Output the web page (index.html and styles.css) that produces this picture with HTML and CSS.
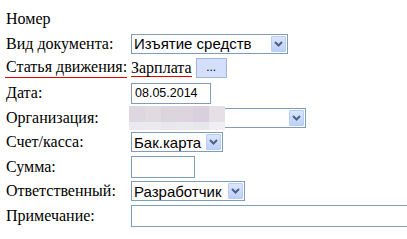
FILE: index.html
```html
<!DOCTYPE html>
<html>
<head>
<meta charset="utf-8">
<link rel="stylesheet" href="styles.css">
</head>
<body>
<div class="form">
  <div class="lbl">Номер</div><div class="ctl"></div>

  <div class="lbl">Вид документа:</div>
  <div class="ctl"><div class="sel w157"><span class="val">Изъятие средств</span><span class="arr"><svg width="9" height="6" viewBox="0 0 9 6"><path d="M1 1 L4.5 4.5 L8 1" fill="none" stroke="#4d6185" stroke-width="2"/></svg></span></div></div>

  <div class="lbl"><span class="red-u">Статья движения:</span></div>
  <div class="ctl"><span class="link">Зарплата</span><span class="btn">...</span></div>

  <div class="lbl">Дата:</div>
  <div class="ctl"><div class="inp w80">08.05.2014</div></div>

  <div class="lbl">Организация:</div>
  <div class="ctl org"><div class="sel w175"><span class="val"></span><span class="arr"><svg width="9" height="6" viewBox="0 0 9 6"><path d="M1 1 L4.5 4.5 L8 1" fill="none" stroke="#4d6185" stroke-width="2"/></svg></span></div><div class="blur"><i></i><i></i><i></i><i></i><i></i><i></i></div></div>

  <div class="lbl">Счет/касса:</div>
  <div class="ctl"><div class="sel w92"><span class="val">Бак.карта</span><span class="arr"><svg width="9" height="6" viewBox="0 0 9 6"><path d="M1 1 L4.5 4.5 L8 1" fill="none" stroke="#4d6185" stroke-width="2"/></svg></span></div></div>

  <div class="lbl">Сумма:</div>
  <div class="ctl"><div class="inp w64 h22"></div></div>

  <div class="lbl">Ответственный:</div>
  <div class="ctl"><div class="sel w114"><span class="val">Разработчик</span><span class="arr"><svg width="9" height="6" viewBox="0 0 9 6"><path d="M1 1 L4.5 4.5 L8 1" fill="none" stroke="#4d6185" stroke-width="2"/></svg></span></div></div>

  <div class="lbl">Примечание:</div>
  <div class="ctl"><div class="inp wide h22"></div></div>
</div>
</body>
</html>
```

FILE: styles.css
```css
html, body {
  margin: 0;
  padding: 0;
  background: #fff;
  overflow: hidden;
}
body {
  padding: 7px 0 0 6px;
  font-family: "Liberation Serif", "Times New Roman", serif;
  font-size: 16px;
  color: #000;
}
.form {
  display: grid;
  grid-template-columns: 125px auto;
  grid-auto-rows: 24.6px;
  align-items: center;
}
.lbl {
  white-space: nowrap;
  line-height: 18px;
}
.ctl {
  display: flex;
  align-items: center;
  position: relative;
  white-space: nowrap;
}
.red-u {
  display: inline-block;
  border-bottom: 1px solid #e00000;
  padding: 0 0 1px 1px;
  margin-left: -1px;
}
.link {
  display: inline-block;
  border-bottom: 1px solid #e00000;
  line-height: 17px;
}
.btn {
  display: inline-flex;
  align-items: center;
  justify-content: center;
  box-sizing: border-box;
  width: 31px;
  height: 20px;
  margin-left: 4px;
  border: 1px solid #a2b6da;
  background: #d4e0fb;
  font-family: "Liberation Sans", Arial, sans-serif;
  font-size: 12px;
  line-height: 12px;
  padding-bottom: 2px;
}
.sel, .inp {
  box-sizing: border-box;
  border: 1px solid #7f9db9;
  background: #fff;
  height: 20px;
  display: flex;
  align-items: center;
  font-family: "Liberation Sans", Arial, sans-serif;
  font-size: 15px;
  color: #000;
}
.sel .val {
  flex: 1;
  padding-left: 2px;
  overflow: hidden;
}
.sel .arr {
  width: 15px;
  height: 16px;
  margin-right: 1px;
  box-sizing: border-box;
  border: 1px solid #b8cdf6;
  background: linear-gradient(#dbe6fd, #bcd0f8);
  border-radius: 1px;
  display: flex;
  align-items: center;
  justify-content: center;
}
.inp {
  padding-left: 3px;
  height: 21px;
  font-size: 12.5px;
}
.h22 { height: 22px; }
.w157 { width: 157px; }
.w175 { width: 175px; }
.w92 { width: 92px; }
.w114 { width: 114px; }
.w80 { width: 80px; }
.w64 { width: 64px; }
.wide { width: 276px; border-right: none; }
.blur {
  position: absolute;
  left: -2px;
  top: -2px;
  width: 96px;
  height: 24px;
  display: flex;
}
.blur i {
  flex: 1;
  background: linear-gradient(#ddd8df 0 65%, #e9e9ef 65% 100%);
}
.blur i:nth-child(2) { background: linear-gradient(#e0dbe1 0 65%, #eaeaef 65% 100%); }
.blur i:nth-child(3) { background: linear-gradient(#dbd5dd 0 65%, #e8e7ed 65% 100%); }
.blur i:nth-child(4) { background: linear-gradient(#dcd5df 0 65%, #e9e9ee 65% 100%); }
.blur i:nth-child(5) { background: linear-gradient(#d8d0dc 0 65%, #e7e6ec 65% 100%); }
.blur i:nth-child(6) { background: linear-gradient(#e4e0e6 0 65%, #efeff3 65% 100%); }
```
